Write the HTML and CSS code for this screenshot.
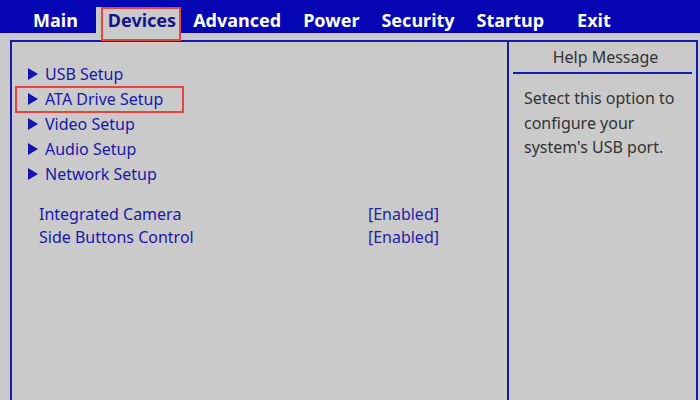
FILE: index.html
```html
<!DOCTYPE html>
<html lang="en">
<head>
  <meta charset="UTF-8">
  <title>BIOS Setup - Devices</title>
  <link rel="stylesheet" href="styles.css">
</head>
<body>

<div class="menubar">
  <span class="tab">Main</span>
  <span class="tab active">Devices</span>
  <span class="tab">Advanced</span>
  <span class="tab">Power</span>
  <span class="tab">Security</span>
  <span class="tab">Startup</span>
  <span class="tab exit">Exit</span>
</div>

<div class="frame">
  <div class="items">
    <div class="sub">USB Setup</div>
    <div class="sub marked">ATA Drive Setup</div>
    <div class="sub">Video Setup</div>
    <div class="sub">Audio Setup</div>
    <div class="sub">Network Setup</div>

    <div class="options">
      <div class="option"><span>Integrated Camera</span><span class="val">[Enabled]</span></div>
      <div class="option"><span>Side Buttons Control</span><span class="val">[Enabled]</span></div>
    </div>
  </div>

  <div class="help">
    <div class="help-title">Help Message</div>
    <div class="help-text">Setect this option to configure your system's USB port.</div>
  </div>
</div>

</body>
</html>
```

FILE: styles.css
```css
body {
  font-family: 'Noto Sans', 'Open Sans', sans-serif;
  margin: 0;
  padding: 0;
  background: #cacaca;
  overflow: hidden;
}

.menubar {
  height: 33px;
  background: #0505b4;
  display: flex;
  align-items: flex-end;
  padding-left: 33px;
}

.tab {
  color: white;
  font-weight: bold;
  font-size: 18px;
  line-height: 26px;
  padding: 0 10px;
  margin-right: 2px;
}

.tab:first-child {
  padding-left: 0;
  margin-right: 8px;
}

.tab.active {
  position: relative;
  background: #cacaca;
  color: #14148c;
  padding: 0 4px 0 12px;
  margin-right: 3px;
}

.tab.active::after {
  content: "";
  position: absolute;
  left: 5px; top: 0;
  right: -1px; bottom: -8px;
  border: 2px solid #e2463f;
}

.tab.exit {
  margin-left: 11px;
}

.frame {
  box-sizing: border-box;
  margin: 7px 2px 0 10px;
  height: calc(100vh - 40px);
  border: 2px solid #1a1aa6;
  border-bottom: none;
  display: grid;
  grid-template-columns: 495px 1fr;
}

.items {
  padding-top: 20px;
  color: #1818a8;
  font-size: 16px;
}

.sub {
  position: relative;
  height: 25px;
  line-height: 25px;
  padding-left: 29px;
  margin-left: 4px;
  width: 138px;
}

.sub::before {
  content: "";
  position: absolute;
  left: 12px; top: 6px;
  border-left: 10px solid #1414b4;
  border-top: 6px solid transparent;
  border-bottom: 6px solid transparent;
}

.sub.marked {
  outline: 2px solid #e2463f;
  outline-offset: -1px;
}

.options {
  margin-top: 16px;
  padding-left: 27px;
  width: 400px;
}

.option {
  display: flex;
  justify-content: space-between;
  height: 23px;
  line-height: 23px;
}

.val {
  color: #2424a0;
}

.help {
  border-left: 2px solid #1a1aa6;
  padding: 0 4px;
  color: #333;
  font-size: 16px;
}

.help-title {
  text-align: center;
  height: 29px;
  line-height: 28px;
  border-bottom: 2px solid #1a1aa6;
  margin-top: 1px;
  padding-left: 6px;
}

.help-text {
  padding: 12px 8px 0 11px;
  line-height: 24.5px;
}
```
